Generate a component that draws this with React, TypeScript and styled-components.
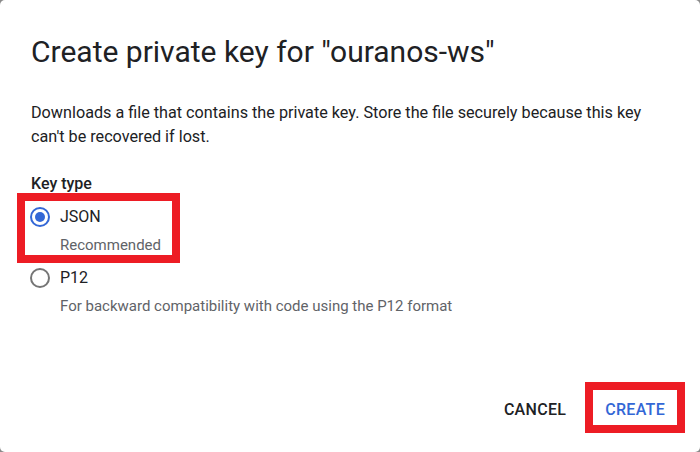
import React from "react";
import styled, { createGlobalStyle } from "styled-components";

const Global = createGlobalStyle`
  html, body { margin: 0; padding: 0; background: #8a8a8a; }
  body { font-family: Roboto, "Noto Sans", Arial, sans-serif; }
  * { box-sizing: border-box; }
`;

const Dialog = styled.div`
  width: 700px;
  height: 452px;
  background: #ffffff;
  border-radius: 5px;
  display: flex;
  flex-direction: column;
  padding: 32px 23px 27px 31px;
  color: #202124;
`;

const Title = styled.h1`
  margin: 0;
  font-size: 30px;
  font-weight: 400;
  line-height: 40px;
  letter-spacing: 0;
`;

const Description = styled.p`
  margin: 29px 0 0 0;
  font-size: 16.2px;
  line-height: 24px;
  color: #202124;
`;

const FieldLabel = styled.div`
  margin-top: 25px;
  font-size: 16px;
  font-weight: 500;
  line-height: 20px;
`;

const Options = styled.div`
  display: flex;
  flex-direction: column;
  align-items: flex-start;
  margin: 7px 0 0 -6px;
  gap: 7px;
`;

const Option = styled.label<{ $highlight?: boolean }>`
  display: grid;
  grid-template-columns: 20px auto;
  column-gap: 10px;
  align-items: center;
  height: 54px;
  padding: 4px 0 0 5px;
  width: ${(p) => (p.$highlight ? "147px" : "auto")};
  outline: ${(p) => (p.$highlight ? "8px solid #ed1c24" : "none")};
`;

const Radio = styled.span<{ $checked?: boolean }>`
  width: 20px;
  height: 20px;
  border-radius: 50%;
  border: 2px solid ${(p) => (p.$checked ? "#3367d6" : "#757575")};
  display: flex;
  align-items: center;
  justify-content: center;
  &::after {
    content: "";
    width: 10px;
    height: 10px;
    border-radius: 50%;
    background: ${(p) => (p.$checked ? "#3367d6" : "transparent")};
  }
`;

const OptionName = styled.span`
  font-size: 16px;
  line-height: 24px;
  color: #202124;
`;

const OptionHint = styled.span`
  grid-column: 2;
  font-size: 15px;
  line-height: 20px;
  margin-top: 6px;
  color: #5f6368;
  white-space: nowrap;
`;

const Actions = styled.div`
  margin-top: auto;
  display: flex;
  justify-content: flex-end;
  align-items: center;
  gap: 15px;
`;

const Button = styled.button<{ $primary?: boolean; $highlight?: boolean }>`
  font-family: Roboto, "Noto Sans", Arial, sans-serif;
  font-size: 16px;
  font-weight: 500;
  letter-spacing: 0.3px;
  text-transform: uppercase;
  background: transparent;
  border: none;
  height: 35px;
  padding: 3px 12px 0;
  display: flex;
  align-items: center;
  color: ${(p) => (p.$primary ? "#3367d6" : "#202124")};
  outline: ${(p) => (p.$highlight ? "8px solid #ed1c24" : "none")};
  cursor: pointer;
`;

export default function App() {
  return (
    <>
      <Global />
      <Dialog>
        <Title>Create private key for "ouranos-ws"</Title>
        <Description>
          Downloads a file that contains the private key. Store the file securely because this key
          can't be recovered if lost.
        </Description>
        <FieldLabel>Key type</FieldLabel>
        <Options>
          <Option $highlight>
            <Radio $checked />
            <OptionName>JSON</OptionName>
            <OptionHint>Recommended</OptionHint>
          </Option>
          <Option>
            <Radio />
            <OptionName>P12</OptionName>
            <OptionHint>For backward compatibility with code using the P12 format</OptionHint>
          </Option>
        </Options>
        <Actions>
          <Button>Cancel</Button>
          <Button $primary $highlight>Create</Button>
        </Actions>
      </Dialog>
    </>
  );
}
